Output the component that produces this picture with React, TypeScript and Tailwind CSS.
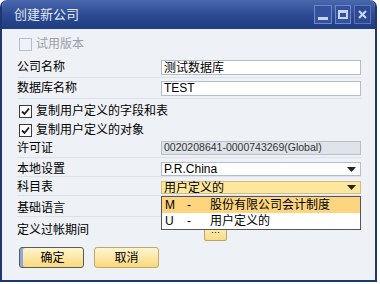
import { useState } from 'react';

const font = "font-['Liberation_Sans','Noto_Sans_CJK_SC',sans-serif]";

function Check({ checked, disabled }: { checked?: boolean; disabled?: boolean }) {
  return (
    <span
      className={`flex h-[13px] w-[13px] items-center justify-center border ${
        disabled ? 'border-[#b9bec6] bg-[#eef1f5]' : 'border-[#3c3c3c] bg-white'
      }`}
    >
      {checked && (
        <svg width="9" height="9" viewBox="0 0 9 9">
          <path d="M1 4.5 L3.5 7 L8 1.5" stroke="#1a1a1a" strokeWidth="1.8" fill="none" />
        </svg>
      )}
    </span>
  );
}

function Arrow() {
  return (
    <svg width="9" height="5" viewBox="0 0 9 5" className="mr-[4px]">
      <path d="M0 0 H9 L4.5 5 Z" fill="#222" />
    </svg>
  );
}

export default function App() {
  const [copyFields, setCopyFields] = useState(true);
  const [copyObjects, setCopyObjects] = useState(true);

  return (
    <div className={`h-[284px] w-[380px] bg-white ${font} text-[12px] text-black`}>
      <div className="flex h-[282px] w-[377px] flex-col overflow-hidden rounded-t-[7px] border-x-2 border-b-2 border-[#1f3674] bg-[#eef1f6]">
        {/* title bar */}
        <div className="flex h-[29px] shrink-0 items-center justify-between bg-gradient-to-b from-[#4a68ae] via-[#2c4b92] to-[#203c82] pl-[12px] pr-[4px]">
          <span className="text-[13px] text-[#e3e9f7]">创建新公司</span>
          <div className="flex items-center gap-[3px]">
            <div className="flex h-[19px] w-[18px] items-end justify-center border border-[#6f88c6] bg-[#3452a0] pb-[3px]">
              <span className="h-[3px] w-[10px] bg-[#c9d5f2]" />
            </div>
            <div className="flex h-[19px] w-[16px] items-center justify-center border border-[#6f88c6] bg-[#3452a0]">
              <span className="h-[9px] w-[10px] border-2 border-t-[3px] border-[#c9d5f2]" />
            </div>
            <div className="flex h-[19px] w-[17px] items-center justify-center border border-[#5b74b4] bg-[#2c4995]">
              <svg width="9" height="9" viewBox="0 0 9 9">
                <path d="M1 1 L8 8 M8 1 L1 8" stroke="#c9d5f2" strokeWidth="2.2" />
              </svg>
            </div>
          </div>
        </div>

        {/* body */}
        <div className="flex flex-col pl-[15px] pr-[14px] pt-[6px]">
          <div className="flex h-[18px] items-center gap-[4px] pl-[2px] text-[#9aa0a8]">
            <Check disabled />
            <span>试用版本</span>
          </div>

          <div className="mt-[5px] flex h-[20px] items-center border-b border-[#dde2ea]">
            <span className="w-[144px] leading-[15px]">公司名称</span>
            <div className="flex h-[15px] w-[200px] items-center border border-[#b2bccb] bg-white pl-[2px]">测试数据库</div>
          </div>

          <div className="flex h-[21px] items-center border-b border-[#dde2ea]">
            <span className="w-[144px] leading-[15px]">数据库名称</span>
            <div className="flex h-[15px] w-[200px] items-center border border-[#b2bccb] bg-white pl-[2px]">TEST</div>
          </div>

          <label className="flex h-[22px] items-center gap-[4px] pl-[2px] pt-[2px]" onClick={() => setCopyFields(!copyFields)}>
            <Check checked={copyFields} />
            <span>复制用户定义的字段和表</span>
          </label>
          <label className="flex h-[18px] items-center gap-[4px] pl-[2px]" onClick={() => setCopyObjects(!copyObjects)}>
            <Check checked={copyObjects} />
            <span>复制用户定义的对象</span>
          </label>

          <div className="flex h-[19px] items-center border-b border-[#dde2ea]">
            <span className="w-[144px] leading-[15px]">许可证</span>
            <div className="flex h-[14px] w-[200px] items-center border border-[#b8c0cb] bg-[#dfe4ea] pl-[2px] text-[10.5px] text-[#333]">
              0020208641-0000743269(Global)
            </div>
          </div>

          <div className="flex h-[19px] items-end border-b border-[#dde2ea]">
            <span className="w-[144px] leading-[14px]">本地设置</span>
            <div className="flex h-[14px] w-[200px] items-center justify-between border border-[#b2bccb] bg-white pl-[2px]">
              <span>P.R.China</span>
              <Arrow />
            </div>
          </div>

          <div className="relative flex h-[19px] items-end border-b border-[#dde2ea] pb-[1px]">
            <span className="w-[144px] leading-[14px]">科目表</span>
            <div className="flex h-[13px] w-[200px] items-center justify-between border border-[#d4bd7c] bg-[#fde79c] pl-[2px]">
              <span>用户定义的</span>
              <Arrow />
            </div>
            {/* open list */}
            <div className="absolute left-[144px] top-[19px] z-10 w-[200px] border border-[#555] bg-white">
              <div className="flex h-[16px] items-center bg-[#fdd57f] pl-[3px]">
                <span className="w-[22px]">M</span>
                <span className="w-[23px]">-</span>
                <span>股份有限公司会计制度</span>
              </div>
              <div className="flex h-[16px] items-center pl-[3px]">
                <span className="w-[22px]">U</span>
                <span className="w-[23px]">-</span>
                <span>用户定义的</span>
              </div>
            </div>
          </div>

          <div className="flex h-[21px] items-end border-b border-[#dde2ea]">
            <span className="w-[144px] leading-[15px]">基础语言</span>
          </div>

          <div className="flex h-[24px] items-end">
            <span className="w-[144px] pb-[3px] leading-[15px]">定义过帐期间</span>
            <div className="ml-[43px] flex h-[19px] w-[23px] items-end justify-center rounded-[2px] border border-[#b9a46d] bg-gradient-to-b from-[#fff3c4] to-[#f9dc85] pb-[4px] text-[9px] leading-[8px]">
              ···
            </div>
          </div>

          <div className="mt-[6px] flex gap-[10px] pl-[2px]">
            <button className="flex h-[21px] w-[65px] items-center justify-center overflow-hidden rounded-[3px] border border-[#5a5a5a] bg-gradient-to-b from-[#fff5cf] to-[#fad97a] pl-[2px] shadow-[inset_3px_0_0_#8aa8dd]">
              确定
            </button>
            <button className="flex h-[21px] w-[65px] items-center justify-center rounded-[3px] border border-[#bda96f] bg-gradient-to-b from-[#fff5cf] to-[#fad97a]">
              取消
            </button>
          </div>
        </div>
      </div>
    </div>
  );
}
